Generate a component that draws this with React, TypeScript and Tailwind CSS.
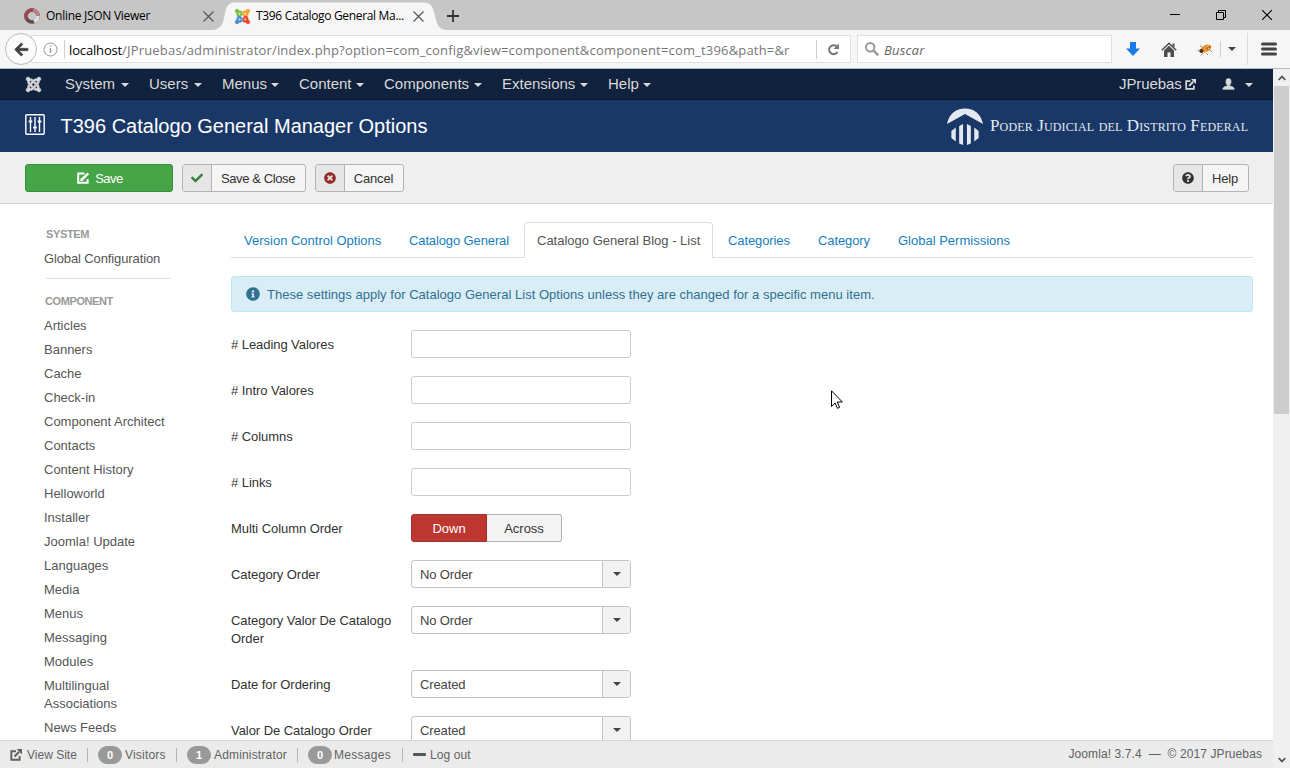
import React from 'react';
import { FaCheck, FaTimesCircle, FaQuestionCircle, FaInfoCircle, FaArrowLeft, FaJoomla } from 'react-icons/fa';
import { ImUser } from 'react-icons/im';

const menus = [
  { label: 'System', width: 'w-[64px]' },
  { label: 'Users', width: 'w-[53px]' },
  { label: 'Menus', width: 'w-[57px]' },
  { label: 'Content', width: 'w-[65px]' },
  { label: 'Components', width: 'w-[98px]' },
  { label: 'Extensions', width: 'w-[86px]' },
  { label: 'Help', width: 'w-[43px]' },
];

const components = [
  'Articles', 'Banners', 'Cache', 'Check-in', 'Component Architect', 'Contacts', 'Content History',
  'Helloworld', 'Installer', 'Joomla! Update', 'Languages', 'Media', 'Menus', 'Messaging', 'Modules',
  'Multilingual Associations', 'News Feeds',
];

function Caret({ className = '' }: { className?: string }) {
  return (
    <svg className={className} width="8" height="4" viewBox="0 0 8 4" fill="currentColor">
      <path d="M0 0h8L4 4z" />
    </svg>
  );
}

function OutIcon({ size }: { size: number }) {
  return (
    <svg width={size} height={size} viewBox="0 0 12 12" fill="none" stroke="currentColor">
      <path d="M6 2.2H1.300v8.500h8.400V7" strokeWidth="1.900" />
      <path d="M4.500 7.500 9 3" strokeWidth="2.200" />
      <path d="M6.500 0H12v5.500z" fill="currentColor" stroke="none" />
    </svg>
  );
}

function EditIcon() {
  return (
    <svg className="mb-px" width="13" height="12" viewBox="0 0 13 12" fill="none" stroke="currentColor">
      <path d="M7.500 1.500H1.200v9.200h9.400V7" strokeWidth="2" />
      <path d="M4.600 7.800 11.300 1.400" strokeWidth="2.600" />
      <path d="M3.200 9.200l.6-3 2.400 2.300z" fill="currentColor" stroke="none" />
    </svg>
  );
}

function CloseX() {
  return (
    <svg width="11" height="11" viewBox="0 0 11 11" fill="none" stroke="#555" strokeWidth="1.2">
      <path d="M.5.5l10 10M10.5.5l-10 10" />
    </svg>
  );
}

const quadrants = [
  { color: '#7ac143', clip: '[clip-path:inset(0_50%_50%_0)]' },
  { color: '#f9a033', clip: '[clip-path:inset(0_0_50%_50%)]' },
  { color: '#f04423', clip: '[clip-path:inset(50%_0_0_50%)]' },
  { color: '#4a8fcb', clip: '[clip-path:inset(50%_50%_0_0)]' },
];

function JoomlaColor() {
  return (
    <span className="grid h-[17px] w-[17px]">
      {quadrants.map((q) => (
        <FaJoomla key={q.color} className={`col-start-1 row-start-1 overflow-visible ${q.clip}`} size={17} color={q.color} stroke={q.color} strokeWidth={9} />
      ))}
    </span>
  );
}

function TabStrip() {
  return (
    <div className="flex h-[30px] shrink-0 items-center bg-[#c6c6c6] font-['Open_Sans',sans-serif] text-[12px] text-black">
      <div className="flex w-[222px] items-center pl-[24px] pt-[2px]">
        <svg width="16" height="16" viewBox="0 0 16 16" fill="none" strokeWidth="3.6">
          <circle cx="8" cy="8" r="6" stroke="#5f4a4e" />
          <path d="M2.500 10.500A6 6 0 0 1 9 2.100" stroke="#a04852" />
          <path d="M9 2.100A6 6 0 0 1 13.900 8" stroke="#b98288" />
          <path d="M13.900 8A6 6 0 0 1 10 13.600" stroke="#e2dcdd" />
        </svg>
        <span className="ml-[6px] w-[157px] whitespace-nowrap tracking-[-0.28px]">Online JSON Viewer</span>
        <CloseX />
      </div>
      <div className="relative flex h-[30px] w-[220px] items-center pl-[12px] pt-[2px]">
        <svg className="absolute left-[-12px] top-0" width="236" height="30" viewBox="0 0 236 30">
          <path d="M3 30C11 29 13 24 14.500 16 16 8 17 2.500 25 2.500H213c9 0 10 5 12 13.500 2 8 3 13 11 14z" fill="#f6f6f6" />
        </svg>
        <span className="relative"><JoomlaColor /></span>
        <span className="relative ml-[5px] w-[157px] whitespace-nowrap tracking-[-0.33px]">T396 Catalogo General Ma...</span>
        <span className="relative"><CloseX /></span>
      </div>
      <svg className="ml-[5px] mt-[2px]" width="12" height="12" viewBox="0 0 12 12" stroke="#333" strokeWidth="1.8">
        <path d="M0 6h12M6 0v12" />
      </svg>
      <div className="ml-auto flex items-center gap-[36px] pr-[18px]">
        <svg width="10" height="10" viewBox="0 0 10 10" stroke="#000"><path d="M0 4.500h10" /></svg>
        <svg width="10" height="10" viewBox="0 0 10 10" stroke="#000" fill="none">
          <path d="M.5 2.500h7v7h-7zM2.500 2.500v-2h7v7h-2" />
        </svg>
        <svg width="10" height="10" viewBox="0 0 10 10" stroke="#000" strokeWidth="1.100"><path d="M0 0l10 10M10 0L0 10" /></svg>
      </div>
    </div>
  );
}

function AddressBar() {
  return (
    <div className="flex h-[39px] shrink-0 items-center border-b border-[#b3bcc6] bg-[#f6f6f6] pl-[5px] font-['Open_Sans',sans-serif]">
      <div className="z-10 flex h-[32px] w-[32px] items-center justify-center rounded-full border border-[#bcbcbc] bg-[#fbfbfb] text-[#444]">
        <FaArrowLeft size={15} stroke="#444" strokeWidth={24} />
      </div>
      <div className="-ml-[6px] flex h-[28px] w-[820px] items-center border border-[#e0e0e0] bg-white pl-[11px]">
        <svg width="15" height="15" viewBox="0 0 15 15" fill="none" stroke="#999">
          <circle cx="7.500" cy="7.500" r="6.500" />
          <path d="M7.500 6v5M7.500 3.500v1.300" strokeWidth="1.400" />
        </svg>
        <div className="ml-[6px] h-[19px] w-px bg-[#d0d0d0]" />
        <div className="ml-[4px] w-[723px] whitespace-nowrap pt-[3px] text-[13px] tracking-[0.18px] text-[#777]">
          <span className="tracking-[-0.15px] text-black">localhost</span>/JPruebas/administrator/index.php?option=com_config&amp;view=component&amp;component=com_t396&amp;path=&amp;r
        </div>
        <div className="ml-[24px] h-[19px] w-px bg-[#ccc]" />
        <svg className="ml-[10px]" width="13" height="13" viewBox="0 0 13 13" fill="none" stroke="#777" strokeWidth="2">
          <path d="M10.500 9A4.500 4.500 0 1 1 9.500 3.200" />
          <path d="M12 .5V6H6.500z" fill="#777" stroke="none" />
        </svg>
      </div>
      <div className="ml-[6px] flex h-[28px] w-[255px] items-center border border-[#e0e0e0] bg-white pl-[7px]">
        <svg width="14" height="14" viewBox="0 0 14 14" fill="none" stroke="#999" strokeWidth="2">
          <circle cx="5.200" cy="5.200" r="4.200" />
          <path d="M8.300 8.300l5 5" strokeWidth="2.400" />
        </svg>
        <span className="ml-[5px] pt-[3px] text-[13px] italic tracking-[0.2px] text-[#666]">Buscar</span>
      </div>
      <svg className="ml-[14px]" width="14" height="14" viewBox="0 0 14 14" fill="#1a7ae8"><path d="M4 0h6v6.500h4L7 14 0 6.500h4z" /></svg>
      <svg className="ml-[21px]" width="16" height="15" viewBox="0 0 16 15" fill="#4d4d4d">
        <path d="M8 3.800l5 4.700V15H9.500v-4.500h-3V15H3V8.500z" />
        <path d="M.8 8.300L8 1.300l7.200 7" fill="none" stroke="#4d4d4d" strokeWidth="1.600" />
        <path d="M11.500 1.500h2v4l-2-2z" />
      </svg>
      <svg className="ml-[20px]" width="17" height="13" viewBox="0 0 17 13" fill="none">
        <path d="M2 8l-1.500-1M5 4L3 2.500M9 10l2 2M13 7l2 2M6 10l-2 2.500" stroke="#a58a72" />
        <ellipse cx="9" cy="5.500" rx="5.800" ry="3.400" fill="#e08424" transform="rotate(-24 9 5.500)" />
        <circle cx="4.300" cy="8" r="2" fill="#4a2a16" />
        <path d="M7 5.500l5-3M8.500 7.500l5-3" stroke="#ffd060" />
        <path d="M9 4l2 3M12 3l1 2" stroke="#7a3c12" strokeWidth=".8" />
      </svg>
      <div className="ml-[6px] h-[16px] w-px bg-[#ccc]" />
      <Caret className="ml-[7px] text-[#444]" />
      <div className="ml-[11px] h-[32px] w-px bg-[#dcdcdc]" />
      <svg className="ml-[13px]" width="16" height="14" viewBox="0 0 16 14" stroke="#444" strokeWidth="3" strokeLinecap="round">
        <path d="M1.500 2h13M1.500 7h13M1.500 12h13" />
      </svg>
    </div>
  );
}

function ToolButton({ icon, label, className }: { icon: React.ReactNode; label: string; className: string }) {
  return (
    <button className={`flex h-[28px] rounded-[3px] border border-[#b3b3b3] bg-[#f5f5f5] text-[#333] ${className}`}>
      <span className="flex h-full w-[29px] items-center justify-center rounded-l-[2px] border-r border-[#b3b3b3] bg-[#e6e6e6]">{icon}</span>
      <span className="flex h-full flex-1 items-center justify-center whitespace-nowrap pr-px pt-[2px]">{label}</span>
    </button>
  );
}

function Field({ label, tall, children }: { label: string; tall?: boolean; children: React.ReactNode }) {
  return (
    <div className={`mb-[18px] flex items-start ${tall ? 'h-[46px]' : 'h-[28px]'}`}>
      <label className="w-[180px] pr-[5px] pt-[6px] leading-[18px] tracking-[-0.06px]">{label}</label>
      {children}
    </div>
  );
}

function TextInput() {
  return <input className="h-[28px] w-[220px] rounded-[3px] border border-[#ccc] bg-white px-2 outline-none" />;
}

function Select({ value }: { value: string }) {
  return (
    <div className="flex h-[28px] w-[220px] items-center rounded-[3px] border border-[#c4c4c4] bg-white">
      <span className="flex-1 pl-[8px] pt-[2px] tracking-[-0.12px] text-[#444]">{value}</span>
      <span className="flex h-full w-[28px] items-center justify-center rounded-r-[2px] border-l border-[#c4c4c4] bg-[#f2f2f2] text-[#444]">
        <Caret />
      </span>
    </div>
  );
}

function TabLink({ label, className }: { label: string; className: string }) {
  return <a className={`h-[35px] whitespace-nowrap leading-[38px] text-[#1580c0] ${className}`}>{label}</a>;
}

function Badge({ n }: { n: number }) {
  return (
    <span className="flex h-[18px] w-[24px] items-center justify-center rounded-full bg-[#999] pt-px text-[11px] font-bold text-white">{n}</span>
  );
}

function Divider({ className }: { className: string }) {
  return <span className={`h-[14px] w-px bg-[#b5b5b5] ${className}`} />;
}

export default function App() {
  return (
    <div className="relative flex h-[768px] w-[1290px] flex-col overflow-hidden bg-white font-['Liberation_Sans',Arial,sans-serif] text-[13px] text-[#333]">
      <TabStrip />
      <AddressBar />
      <div className="flex min-h-0 flex-1">
        <div className="flex w-[1273px] flex-col">
          <nav className="flex h-[31px] shrink-0 items-center border-b border-[#0b182b] bg-[#10223e] pl-[25px] text-[15px] text-[#d9d9d9]">
            <FaJoomla className="overflow-visible" size={17} stroke="currentColor" strokeWidth={14} />
            <div className="ml-[23px] flex gap-[20px]">
              {menus.map((m) => (
                <span key={m.label} className={`flex items-center justify-between whitespace-nowrap ${m.width}`}>
                  {m.label}
                  <Caret className="mt-[2px]" />
                </span>
              ))}
            </div>
            <div className="ml-auto flex items-center pr-[20px]">
              <span className="w-[66px] tracking-[-0.1px]">JPruebas</span>
              <OutIcon size={11} />
              <ImUser className="mb-px ml-[26px] overflow-visible" size={13} stroke="currentColor" strokeWidth={1} />
              <Caret className="ml-[10px] mt-[2px]" />
            </div>
          </nav>
          <header className="flex h-[52px] shrink-0 items-center bg-[#1a3867] pl-[25px] text-white">
            <svg className="mb-[3px]" width="20" height="21" viewBox="0 0 20 21" fill="none" stroke="#fff" strokeWidth="1.400">
              <rect x=".8" y=".8" width="18.400" height="19.400" rx="1" />
              <path d="M5.500 3v15M10 3v15M14.500 3v15" />
              <path d="M3.700 7.500h3.600M8.200 13.500h3.600M12.700 7.500h3.600" strokeWidth="2" />
            </svg>
            <h1 className="ml-[15.500px] whitespace-nowrap text-[20px]">T396 Catalogo General Manager Options</h1>
            <div className="ml-auto flex w-[326px] shrink-0 items-center text-[#e4e9f1]">
              <svg className="shrink-0" width="36" height="37" viewBox="0 0 37 37" fill="currentColor" preserveAspectRatio="none">
                <path d="M0 16C2 6 9 .5 18.500 .5S35 6 37 16L18.500 6z" />
                <path d="M4.500 23l4.500-3.500v14L4.500 30zM12.500 18l4-2V37l-4-1.500zM20.500 16l4 2v17.500l-4 1.500zM28 19.500l4.500 3.500v7l-4.500 3.500z" />
              </svg>
              <span className="ml-[7px] whitespace-nowrap font-['Liberation_Serif',serif] text-[17px] tracking-[0.14px] [font-variant:small-caps]">Poder Judicial del Distrito Federal</span>
            </div>
          </header>
          <div className="flex h-[52px] shrink-0 items-center border-b border-[#d6d6d6] bg-[#efefef] pl-[25px] pr-[24px]">
            <button className="flex h-[28px] w-[148px] items-center justify-center gap-[5px] rounded-[3px] border border-[#36903a] bg-[#46a546] pl-[2px] pt-[2px] tracking-[-0.5px] text-white">
              <EditIcon />
              Save
            </button>
            <div className="ml-[9px]">
              <ToolButton icon={<FaCheck className="text-[#378137]" size={12} />} label="Save & Close" className="w-[124px] tracking-[-0.4px]" />
            </div>
            <div className="ml-[9px]">
              <ToolButton icon={<FaTimesCircle className="text-[#942a25]" size={12} />} label="Cancel" className="w-[89px] tracking-[-0.2px]" />
            </div>
            <div className="ml-auto">
              <ToolButton icon={<FaQuestionCircle size={12} />} label="Help" className="w-[76px] tracking-[-0.2px]" />
            </div>
          </div>
          <div className="flex min-h-0 flex-1 overflow-hidden">
            <aside className="w-[231px] shrink-0 pl-[44px] pt-[21px] leading-[18px] text-[#555]">
              <h2 className="ml-[2px] text-[11px] font-bold tracking-[-0.35px] text-[#999]">SYSTEM</h2>
              <a className="block pb-[3px] pt-[7px] tracking-[-0.12px]">Global Configuration</a>
              <hr className="ml-[2px] mt-[7px] w-[125px] border-[#dedede]" />
              <h2 className="mb-[4px] ml-[1px] mt-[13px] text-[11px] font-bold tracking-[-0.4px] text-[#999]">COMPONENT</h2>
              {components.map((c) => (
                <a key={c} className={`block py-[3px] ${c.startsWith('Multi') ? 'w-[90px]' : ''}`}>{c}</a>
              ))}
            </aside>
            <main className="w-[1022px] pt-[18px]">
              <div className="flex h-[36px] border-b border-[#ddd]">
                <TabLink label="Version Control Options" className="ml-[13px] w-[165px]" />
                <TabLink label="Catalogo General" className="w-[115px] tracking-[-0.12px]" />
                <a className="z-10 h-[36px] w-[189px] whitespace-nowrap rounded-t-[4px] border border-b-0 border-[#ddd] bg-white pl-[12px] leading-[36px] text-[#555]">Catalogo General Blog - List</a>
                <TabLink label="Categories" className="ml-[15px] w-[90px] tracking-[-0.1px]" />
                <TabLink label="Category" className="w-[80px] tracking-[-0.1px]" />
                <TabLink label="Global Permissions" className="w-[140px]" />
              </div>
              <div className="mb-[18px] mt-[18px] flex h-[36px] items-center rounded-[3px] border border-[#bce8f1] bg-[#d9edf7] pl-[14px] text-[#31708f]">
                <FaInfoCircle size={14} />
                <span className="ml-[7px] mt-px whitespace-nowrap tracking-[0.02px]">These settings apply for Catalogo General List Options unless they are changed for a specific menu item.</span>
              </div>
              <Field label="# Leading Valores"><TextInput /></Field>
              <Field label="# Intro Valores"><TextInput /></Field>
              <Field label="# Columns"><TextInput /></Field>
              <Field label="# Links"><TextInput /></Field>
              <Field label="Multi Column Order">
                <div className="flex h-[28px]">
                  <button className="w-[76px] rounded-l-[3px] border border-[#a12f2a] bg-[#bd362f] pt-px text-white">Down</button>
                  <button className="w-[75px] rounded-r-[3px] border border-l-0 border-[#b3b3b3] bg-[#f3f3f3] pt-px">Across</button>
                </div>
              </Field>
              <Field label="Category Order"><Select value="No Order" /></Field>
              <Field label="Category Valor De Catalogo Order" tall><Select value="No Order" /></Field>
              <Field label="Date for Ordering"><Select value="Created" /></Field>
              <Field label="Valor De Catalogo Order"><Select value="Created" /></Field>
            </main>
          </div>
          <footer className="flex h-[28px] shrink-0 items-center border-t border-[#d4d4d4] bg-[#ebebeb] pl-[10px] pr-[11px] text-[12px] text-[#626262]">
            <OutIcon size={12} />
            <span className="ml-[5px] w-[50px] whitespace-nowrap">View Site</span>
            <Divider className="ml-[10px] mr-[10px]" />
            <Badge n={0} />
            <span className="ml-[3px] w-[41px] tracking-[0.2px]">Visitors</span>
            <Divider className="ml-[10px] mr-[10px]" />
            <Badge n={1} />
            <span className="ml-[3px] w-[73px] tracking-[0.17px]">Administrator</span>
            <Divider className="ml-[10px] mr-[10px]" />
            <Badge n={0} />
            <span className="ml-[2px] w-[57px] tracking-[0.3px]">Messages</span>
            <Divider className="ml-[11px] mr-[10px]" />
            <span className="h-[3px] w-[13px] rounded-[1px] bg-[#555]" />
            <span className="ml-[4px] tracking-[0.1px]">Log out</span>
            <span className="ml-auto whitespace-nowrap pb-px tracking-[0.1px]">Joomla! 3.7.4&nbsp; —&nbsp; © 2017 JPruebas</span>
          </footer>
        </div>
        <div className="flex w-[17px] flex-col bg-[#f0f0f0] pl-px">
          <div className="flex h-[17px] items-center justify-center">
            <svg width="8" height="6" viewBox="0 0 8 6" fill="none" stroke="#505050" strokeWidth="1.800"><path d="M.7 5L4 1.500 7.300 5" /></svg>
          </div>
          <div className="h-[328px] w-[15px] bg-[#cdcdcd]" />
          <div className="mt-auto flex h-[17px] items-center justify-center">
            <svg width="8" height="6" viewBox="0 0 8 6" fill="none" stroke="#505050" strokeWidth="1.800"><path d="M.7 1L4 4.500 7.300 1" /></svg>
          </div>
        </div>
      </div>
      <svg className="absolute left-[831px] top-[390px]" width="12" height="19" viewBox="0 0 12 19" fill="#fff" stroke="#000">
        <path d="M.5 .8v15.700l3.600-3.500 2.300 5.300 2.200-.9L6.300 12h5.100z" />
      </svg>
    </div>
  );
}
